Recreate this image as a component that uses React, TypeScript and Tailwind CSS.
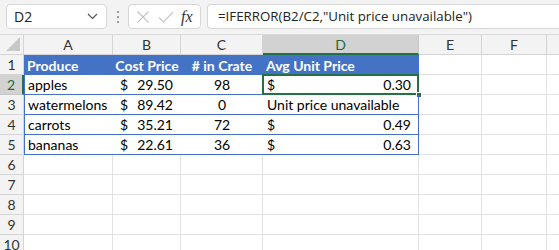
import React from "react";

const cols = ["A", "B", "C", "D", "E", "F", "G"];
const colW = [89, 68, 82, 156, 63, 65, 70];

type Row = { a: string; b: string; c: string; d: "num" | "text"; dv: string };
const data: Row[] = [
  { a: "apples", b: "29.50", c: "98", d: "num", dv: "0.30" },
  { a: "watermelons", b: "89.42", c: "0", d: "text", dv: "Unit price unavailable" },
  { a: "carrots", b: "35.21", c: "72", d: "num", dv: "0.49" },
  { a: "bananas", b: "22.61", c: "36", d: "num", dv: "0.63" },
];

const font = { fontFamily: "Lato, 'Liberation Sans', sans-serif" };

export default function App() {
  return (
    <div className="w-[559px] h-[250px] overflow-hidden bg-white relative">
      {/* Formula bar */}
      <div className="h-[35px] bg-[#f3f3f3] flex items-start pt-[4px] pl-[6px] border-b border-[#dadada]">
        <div className="w-[101px] h-[25px] bg-white border border-[#d6d6d6] rounded-[4px] flex items-center justify-between pl-[7px] pr-[8px]">
          <span className="text-[14px] text-[#222]" style={{ fontFamily: "'Open Sans', sans-serif" }}>D2</span>
          <svg width="11" height="7" viewBox="0 0 11 7"><path d="M1 1 L5.5 5.5 L10 1" fill="none" stroke="#555" strokeWidth="1.2" /></svg>
        </div>
        <div className="w-[21px] h-[25px] flex flex-col items-center justify-center gap-[3px]">
          <div className="w-[2px] h-[2px] bg-[#9a9a9a]" />
          <div className="w-[2px] h-[2px] bg-[#9a9a9a]" />
          <div className="w-[2px] h-[2px] bg-[#9a9a9a]" />
        </div>
        <div className="w-[73px] h-[25px] bg-white border border-[#d6d6d6] rounded-[4px] flex items-center pl-[6px]">
          <svg width="14" height="14" viewBox="0 0 14 14" className="ml-[1px]"><path d="M1.5 1.5 L12.5 12.5 M12.5 1.5 L1.5 12.5" stroke="#c4c4c4" strokeWidth="1.1" /></svg>
          <svg width="16" height="14" viewBox="0 0 16 14" className="ml-[8px]"><path d="M1 7.5 L5.5 12 L15 2" fill="none" stroke="#c4c4c4" strokeWidth="1.1" /></svg>
          <span className="ml-[7px] text-[16px] italic text-[#333] leading-none" style={{ fontFamily: "'Liberation Serif', serif" }}>fx</span>
        </div>
        <div className="ml-[6px] flex-1 h-[25px] bg-white border border-[#d6d6d6] rounded-l-[4px] border-r-0 flex items-center pl-[10px]">
          <span className="text-[13.3px] text-[#222]" style={{ fontFamily: "'Open Sans', sans-serif" }}>=IFERROR(B2/C2,"Unit price unavailable")</span>
        </div>
      </div>

      {/* Grid */}
      <div
        className="grid text-[14px] text-black"
        style={{
          ...font,
          gridTemplateColumns: `24px ${colW.map((w) => w + "px").join(" ")}`,
          gridAutoRows: "20px",
        }}
      >
        {/* header row */}
        <div className="bg-[#f3f3f3] border-r border-b border-[#d4d4d4] relative">
          <svg width="14" height="14" viewBox="0 0 14 14" className="absolute right-[3px] bottom-[3px]"><path d="M14 0 L14 14 L0 14 Z" fill="#c8c8c8" /></svg>
        </div>
        {cols.map((c) =>
          c === "D" ? (
            <div key={c} className="bg-[#d2d2d2] border-r border-[#c6c6c6] border-b-2 border-b-[#217346] flex items-center justify-center text-[14px] text-[#1f6a3d]">
              {c}
            </div>
          ) : (
            <div key={c} className="bg-[#f3f3f3] border-r border-b border-[#d4d4d4] flex items-center justify-center text-[14px] text-[#333]">
              {c === "G" ? "" : c}
            </div>
          )
        )}

        {/* row 1 */}
        <RowHead n={1} />
        <div className="bg-[#4472c4] text-white font-bold pl-[3px] flex items-center border-r border-[#4472c4]">Produce</div>
        <div className="bg-[#4472c4] text-white font-bold flex items-center justify-center">Cost Price</div>
        <div className="bg-[#4472c4] text-white font-bold flex items-center justify-center">&#35; in Crate</div>
        <div className="bg-[#4472c4] text-white font-bold pl-[3px] flex items-center">Avg Unit Price</div>
        <Empty />
        <Empty />
        <Empty />

        {data.map((r, i) => {
          const n = i + 2;
          const active = n === 2;
          return (
            <React.Fragment key={n}>
              <RowHead n={n} active={active} />
              <div className="border-l border-b border-[#4472c4] pl-[3px] flex items-center">{r.a}</div>
              <div className="border-b border-[#4472c4] flex items-center justify-between pl-[7px] pr-[8px]">
                <span>$</span>
                <span>{r.b}</span>
              </div>
              <div className="border-b border-[#4472c4] flex items-center justify-center">{r.c}</div>
              <div className="border-b border-r border-[#4472c4] relative flex items-center pl-[4px] pr-[7px]">
                {r.d === "num" ? (
                  <div className="flex-1 flex justify-between">
                    <span>$</span>
                    <span>{r.dv}</span>
                  </div>
                ) : (
                  <span>{r.dv}</span>
                )}
                {active && (
                  <>
                    <div className="absolute -left-[1px] -top-[1px] -right-[1px] -bottom-[1px] border-2 border-[#217346] pointer-events-none" />
                    <div className="absolute -right-[4px] -bottom-[4px] w-[6px] h-[6px] bg-[#217346] border border-white" />
                  </>
                )}
              </div>
              <Empty />
              <Empty />
              <Empty />
            </React.Fragment>
          );
        })}

        {[6, 7, 8, 9, 10].map((n) => (
          <React.Fragment key={n}>
            <RowHead n={n} />
            {cols.map((c) => (
              <Empty key={c} />
            ))}
          </React.Fragment>
        ))}
      </div>
    </div>
  );
}

function RowHead({ n, active }: { n: number; active?: boolean }) {
  return active ? (
    <div className="bg-[#d2d2d2] border-r-2 border-r-[#217346] border-b border-b-[#c6c6c6] flex items-center justify-center text-[14px] text-[#1f6a3d]">
      {n}
    </div>
  ) : (
    <div className="bg-[#f3f3f3] border-r border-b border-[#d4d4d4] flex items-center justify-center text-[14px] text-[#333]">
      {n}
    </div>
  );
}

function Empty() {
  return <div className="border-r border-b border-[#e1e1e1]" />;
}
